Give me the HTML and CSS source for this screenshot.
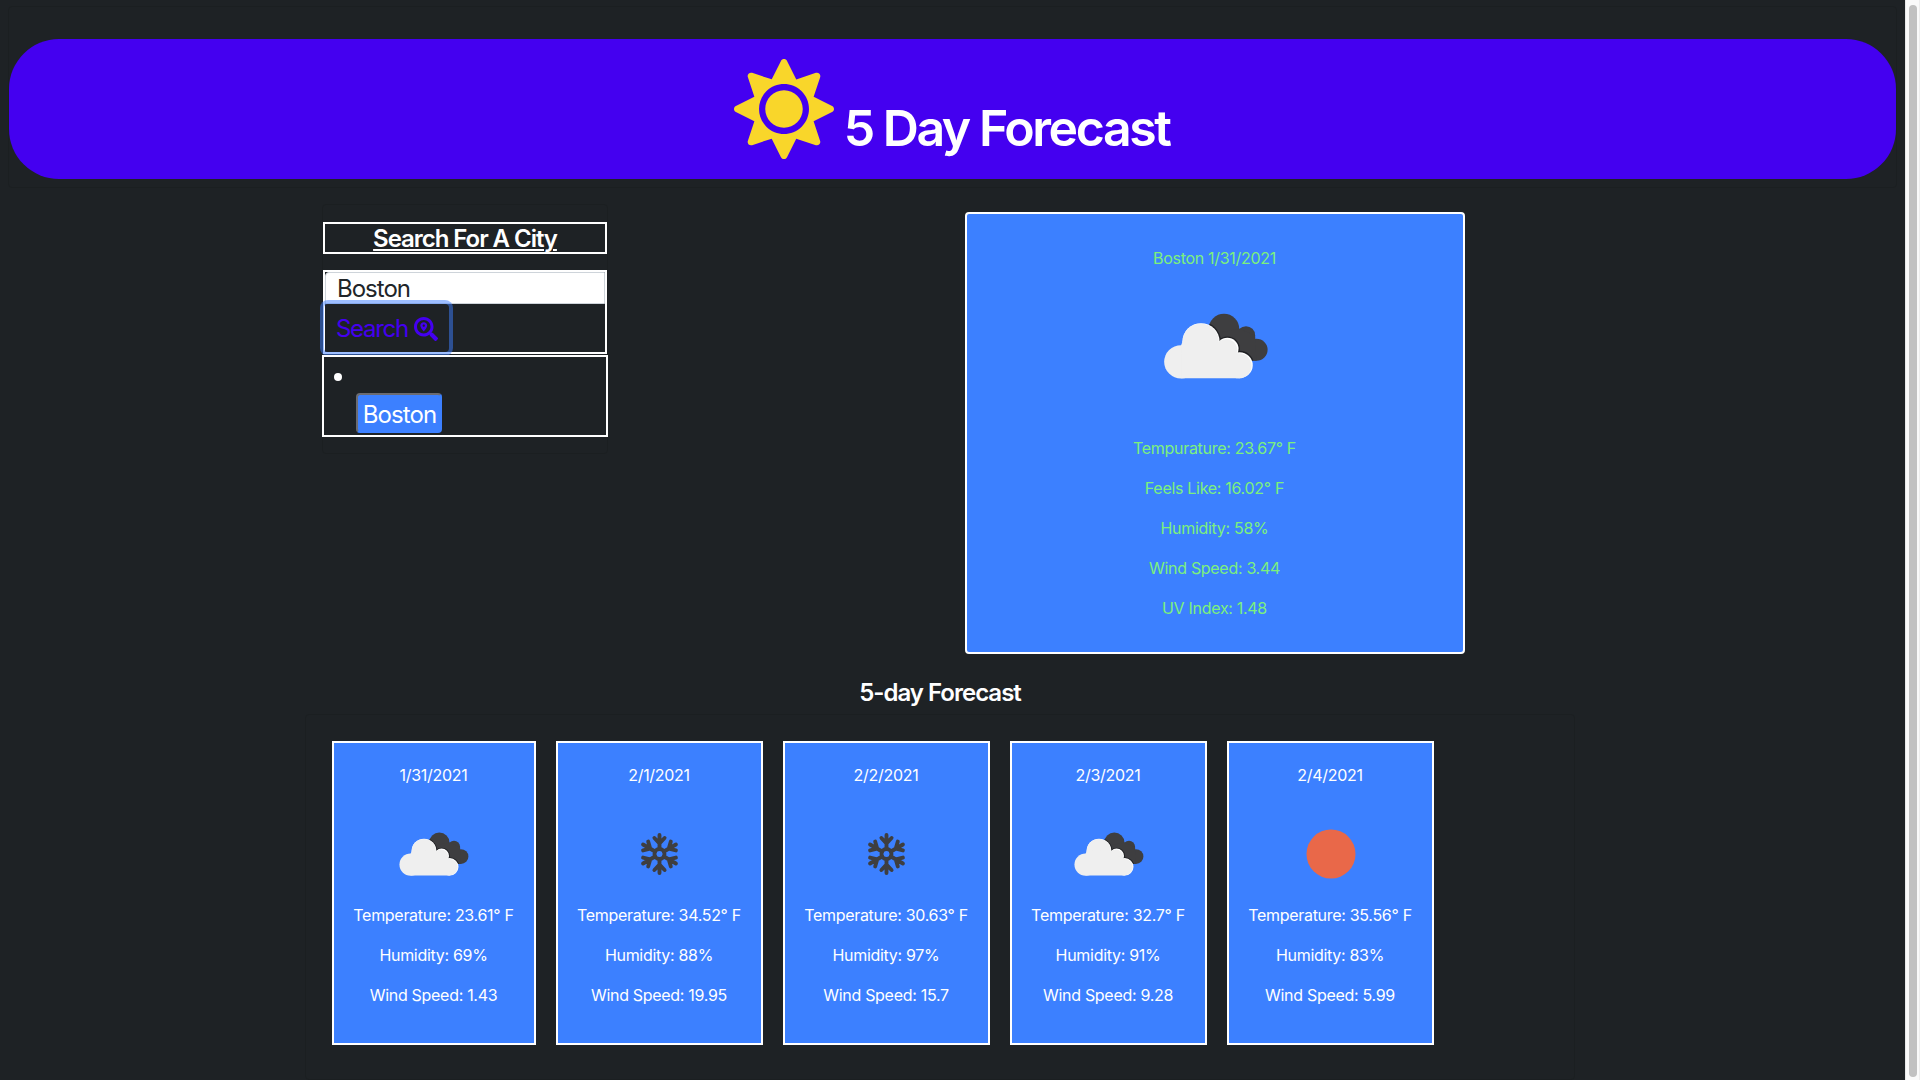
FILE: index.html
```html
<!DOCTYPE html>
<html lang="en">
<head>
<meta charset="utf-8">
<title>5 Day Forecast</title>
<link rel="stylesheet" href="styles.css">
</head>
<body>
<svg class="defs" aria-hidden="true">
  <defs>
    <clipPath id="dark-clip"><circle cx="811" cy="385" r="45"/><circle cx="876" cy="404" r="27"/><circle cx="907" cy="448" r="33"/><path d="M770 400L811 340 856 385 903 405 907 481 840 481Z"/></clipPath>
    <symbol id="clouds" viewBox="565.5 211.5 443.7 450" preserveAspectRatio="none">
      <g fill="#3e3e40"><circle cx="811" cy="385" r="45"/><circle cx="876" cy="404" r="27"/><circle cx="907" cy="448" r="33"/><path d="M780 400L856 385 903 405 907 481H840Z"/></g>
      <g fill="#1f2023" clip-path="url(#dark-clip)"><circle cx="743" cy="423" r="59"/><circle cx="821" cy="445" r="37"/><circle cx="857" cy="494" r="43"/></g>
      <g fill="#fff"><circle cx="743" cy="423" r="55"/><circle cx="821" cy="445" r="33"/><circle cx="857" cy="494" r="39"/></g>
      <g fill="#efefef"><circle cx="684" cy="484" r="50"/><circle cx="742" cy="423" r="53.500"/><circle cx="818" cy="448" r="32"/><circle cx="855" cy="496" r="37.500"/><path d="M684 434L690 420 798 425 853 460 857 533.500H684Z"/></g>
    </symbol>
    <g id="arm"><path d="M0-5V-18.600M0-10.500L-5-15.700M0-10.500L5-15.700"/></g>
    <symbol id="snow" viewBox="-48.5 -49 98 98">
      <g fill="none" stroke="#3e3e40" stroke-width="3.800" stroke-linecap="round">
        <circle r="4.900"/><use href="#arm"/><use href="#arm" transform="rotate(60)"/><use href="#arm" transform="rotate(120)"/><use href="#arm" transform="rotate(180)"/><use href="#arm" transform="rotate(240)"/><use href="#arm" transform="rotate(300)"/>
      </g>
    </symbol>
    <symbol id="sun" viewBox="-50 -50 100 100"><circle r="24.500" fill="#e96849"/></symbol>
  </defs>
</svg>
<div class="page">
  <header class="header-card">
    <h1 class="banner">
      <svg class="banner-icon" viewBox="0 0 512 512"><path fill="#f9d62a" d="M256 160c-52.900 0-96 43.100-96 96s43.100 96 96 96 96-43.100 96-96-43.100-96-96-96zm246.400 80.500l-94.700-47.300 33.500-100.400c4.500-13.600-8.400-26.500-21.900-21.900l-100.400 33.500-47.400-94.800c-6.400-12.800-24.600-12.800-31 0l-47.300 94.700L92.700 70.800c-13.600-4.500-26.500 8.400-21.900 21.900l33.500 100.400-94.700 47.400c-12.800 6.400-12.800 24.600 0 31l94.700 47.300-33.500 100.500c-4.500 13.600 8.400 26.500 21.900 21.900l100.400-33.500 47.300 94.700c6.400 12.800 24.600 12.800 31 0l47.300-94.700 100.400 33.500c13.600 4.500 26.500-8.400 21.900-21.900l-33.500-100.400 94.700-47.300c13-6.500 13-24.700.2-31.100zm-155.900 106c-49.900 49.900-131.100 49.900-181 0-49.900-49.900-49.900-131.100 0-181 49.900-49.900 131.100-49.900 181 0 49.900 49.900 49.900 131.100 0 181z"/></svg>
      <span class="banner-title">5 Day Forecast</span>
    </h1>
  </header>
  <main class="main">
    <section class="top">
      <aside class="search-card">
        <h4 class="search-title"><span>Search For A City</span></h4>
        <form class="search-form">
          <input class="search-input" type="text" value="Boston" aria-label="City">
          <button class="search-button" type="button"><span>Search</span><svg class="search-icon" viewBox="0 0 512 512"><path fill="currentColor" d="M505.040 442.660l-99.710-99.690c-4.500-4.500-10.600-7-17-7h-16.300c27.600-35.300 44-79.690 44-127.990C416.030 93.090 322.920 0 208.020 0S0 93.090 0 207.980s93.110 207.980 208.020 207.980c48.300 0 92.710-16.400 128.010-44v16.300c0 6.400 2.500 12.500 7 17l99.710 99.690c9.400 9.400 24.600 9.400 33.900 0l28.300-28.300c9.400-9.400 9.400-24.590.1-33.990zm-297.020-90.700c-79.540 0-144-64.340-144-143.980 0-79.530 64.350-143.980 144-143.980 79.540 0 144 64.340 144 143.980 0 79.530-64.350 143.980-144 143.980zm.02-239.960c-40.780 0-73.840 33.050-73.840 73.830 0 32.960 48.260 93.050 66.750 114.860a9.240 9.240 0 0 0 14.180 0c18.490-21.810 66.750-81.890 66.750-114.860 0-40.780-33.060-73.830-73.840-73.830zm0 96c-13.260 0-24-10.750-24-24 0-13.260 10.750-24 24-24s24 10.750 24 24c0 13.250-10.750 24-24 24z"/></svg></button>
        </form>
        <div class="history">
          <i class="bullet"></i>
          <button class="history-button" type="button">Boston</button>
        </div>
      </aside>
      <article class="current">
        <p>Boston 1/31/2021</p>
        <svg class="current-icon"><use href="#clouds"/></svg>
        <p>Tempurature: 23.67° F</p>
        <p>Feels Like: 16.02° F</p>
        <p>Humidity: 58%</p>
        <p>Wind Speed: 3.44</p>
        <p>UV Index: 1.48</p>
      </article>
    </section>
    <h4 class="forecast-title">5-day Forecast</h4>
    <section class="forecast">
      <article class="day"><p>1/31/2021</p><svg class="day-icon"><use href="#clouds"/></svg><p>Temperature: 23.61° F</p><p>Humidity: 69%</p><p>Wind Speed: 1.43</p></article>
      <article class="day"><p>2/1/2021</p><svg class="day-icon"><use href="#snow"/></svg><p>Temperature: 34.52° F</p><p>Humidity: 88%</p><p>Wind Speed: 19.95</p></article>
      <article class="day"><p>2/2/2021</p><svg class="day-icon"><use href="#snow"/></svg><p>Temperature: 30.63° F</p><p>Humidity: 97%</p><p>Wind Speed: 15.7</p></article>
      <article class="day"><p>2/3/2021</p><svg class="day-icon"><use href="#clouds"/></svg><p>Temperature: 32.7° F</p><p>Humidity: 91%</p><p>Wind Speed: 9.28</p></article>
      <article class="day"><p>2/4/2021</p><svg class="day-icon"><use href="#sun"/></svg><p>Temperature: 35.56° F</p><p>Humidity: 83%</p><p>Wind Speed: 5.99</p></article>
    </section>
  </main>
</div>
<div class="scrollbar"><div class="thumb"></div></div>
</body>
</html>
```
FILE: styles.css
```css
* { box-sizing: border-box; }
html, body { height: 100%; }
body {
  margin: 0;
  display: flex;
  overflow: hidden;
  background: #1e2225;
  color: #fff;
  font: 400 16px/24px Inter, sans-serif;
  letter-spacing: -0.3px;
}
h1, h4, p { margin: 0; font-weight: 600; }
p { padding-right: 1px; font-weight: 400; }
.defs { position: absolute; width: 0; height: 0; }
.page { flex: 1; height: 1080px; padding: 6px 8px 0; }
.header-card {
  height: 182px;
  padding-top: 32px;
  border: 1px solid #1b1f21;
  border-radius: 4px;
}
.banner {
  display: flex;
  justify-content: center;
  height: 140px;
  padding: 20px 2px 0 0;
  gap: 10px;
  border-radius: 50px;
  background: #4400f0;
}
.banner-icon { width: 100px; height: 100px; }
.banner-title { padding-top: 39px; font-size: 50px; line-height: 60px; letter-spacing: -2.45px; white-space: nowrap; }
.main { padding: 16px 0 0 297px; }
.top { display: flex; align-items: flex-start; gap: 357px; padding: 8px 0 0 17px; }
.search-card {
  width: 286px;
  height: 250px;
  margin-top: -8px;
  padding-top: 17px;
  border: 1px solid #1b1f21;
  border-radius: 4px;
}
.search-title {
  height: 32px;
  border: 2px solid #fff;
  font-size: 24px;
  line-height: 30px;
  text-align: center;
  text-decoration: underline;
  text-decoration-thickness: 2px;
  text-underline-offset: 2px;
  text-decoration-skip-ink: auto;
  letter-spacing: -1.05px;
}
.search-form { height: 84px; margin-top: 16px; border: 2px solid #fff; }
.search-input {
  display: block;
  width: 100%;
  height: 32px;
  padding: 1px 12px 0 11px;
  border: 1px solid #ced4da;
  border-radius: 4px 0 0 0;
  background: #fff;
  color: #212529;
  font: 400 24px/28px Inter, sans-serif;
  letter-spacing: -1px;
}
.search-button {
  display: flex;
  align-items: center;
  gap: 6px;
  width: 125px;
  height: 48px;
  margin-left: -1px;
  padding: 2px 0 0 12px;
  border: 0;
  border-radius: 4px;
  box-shadow: 0 0 0 4px rgba(60, 126, 255, .5);
  background: transparent;
  color: #4400f0;
  font: 400 24px/28px Inter, sans-serif;
  letter-spacing: -1.3px;
}
.search-icon { width: 24px; height: 24px; }
.history {
  display: flex;
  align-items: flex-start;
  height: 82px;
  margin: 1px -1px 0;
  padding: 16px 0 0 10px;
  border: 2px solid #fff;
}
.bullet { width: 8px; height: 8px; border-radius: 50%; background: #fff; }
.history-button {
  width: 86px;
  height: 40px;
  margin: 20px 0 0 14px;
  padding: 4px 0 0 1px;
  border: 2px solid #3c80ff;
  border-top-color: #6b6b70;
  border-left-color: #6b6b70;
  border-radius: 4px;
  background: #3c80ff;
  color: #fff;
  font: 400 24px/30px Inter, sans-serif;
  letter-spacing: -0.9px;
}
.current {
  display: flex;
  flex-direction: column;
  align-items: center;
  gap: 16px;
  width: 500px;
  height: 442px;
  padding: 32px 0;
  border: 2px solid #fff;
  border-radius: 4px;
  background: #3c80ff;
  color: #7cf07c;
}
.current-icon { width: 150px; height: 150px; margin: -15px 0 -1px 2px; flex: none; }
.forecast-title {
  width: 1270px;
  margin-top: 23px;
  font-size: 24px;
  line-height: 32px;
  text-align: center;
  letter-spacing: -1px;
}
.forecast {
  display: grid;
  grid-template-columns: 204px 207px 207px 197px 207px;
  gap: 20px;
  width: 1270px;
  height: 366px;
  margin-top: 5px;
  padding: 26px;
  border: 1px solid #1b1f21;
  border-radius: 4px;
}
.day {
  display: flex;
  flex-direction: column;
  align-items: center;
  gap: 16px;
  height: 304px;
  padding: 20px 0;
  border: 2px solid #fff;
  background: #3c80ff;
  white-space: nowrap;
}
.day-icon { width: 100px; height: 100px; margin: 1px 0 -17px; flex: none; }
.scrollbar { width: 15px; height: 1080px; padding: 5px 2px 3px 3px; border-left: 1px solid #e8e8e8; border-right: 1px solid #ededed; background: #fafafa; }
.thumb { width: 8px; height: 100%; border-radius: 4px; background: #c1c1c1; }
```
